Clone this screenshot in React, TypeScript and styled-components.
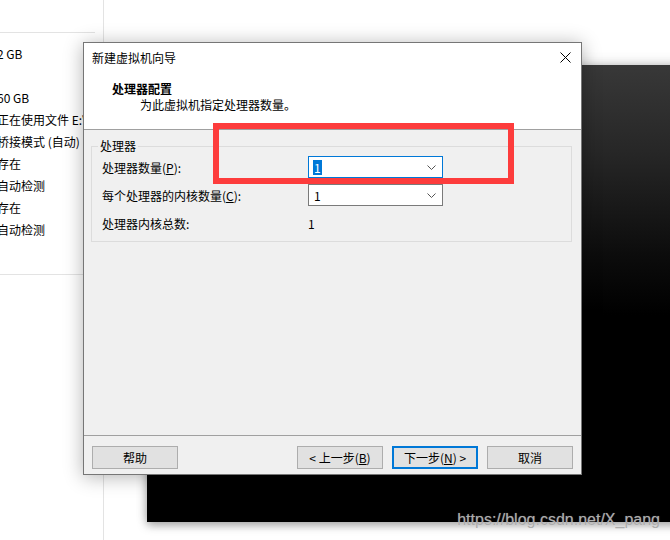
import React from 'react';
import styled, {createGlobalStyle} from 'styled-components';

const GlobalStyle = createGlobalStyle`
  html, body {
    margin: 0;
    padding: 0;
  }
  body {
    background: #fff;
    color: #000;
    font-family: "Noto Sans CJK SC", "Noto Sans", sans-serif;
    font-size: 12px;
  }
`

const summaryValues = ['2 GB', '', '60 GB', '正在使用文件 E:\\cn_windows_10', '桥接模式 (自动)', '存在', '自动检测', '存在', '自动检测']

const ChevronDown = () => (
    <svg width="9" height="5" viewBox="0 0 9 5">
        <polyline points="0.5,0.5 4.5,4.5 8.5,0.5" fill="none" stroke="#555" strokeWidth="1"/>
    </svg>
)

const CloseIcon = () => (
    <svg width="11" height="11" viewBox="0 0 11 11">
        <path d="M0.5 0.5 L10.5 10.5 M10.5 0.5 L0.5 10.5" stroke="#000" strokeWidth="1"/>
    </svg>
)

type ComboProps = { value: string, focused?: boolean }

const Combo: React.FC<ComboProps> = ({value, focused}) => (
    <ComboBox $focused={focused}>
        <ComboValue $focused={focused}>{value}</ComboValue>
        <ChevronDown/>
    </ComboBox>
)

export default function App() {
    return (
        <>
            <GlobalStyle/>
            <Screen>
                <SummaryPanel>
                    <PanelHead/>
                    <SummaryList>
                        {summaryValues.map((v, i) => <SummaryRow key={i}>{v}</SummaryRow>)}
                    </SummaryList>
                </SummaryPanel>

                <MainArea>
                    <VmScreen/>
                </MainArea>

                <Dialog>
                    <TitleBar>
                        <span>新建虚拟机向导</span>
                        <CloseIcon/>
                    </TitleBar>
                    <Header>
                        <HeaderTitle>处理器配置</HeaderTitle>
                        <HeaderSub>为此虚拟机指定处理器数量。</HeaderSub>
                    </Header>
                    <Body>
                        <Group>
                            <Legend>处理器</Legend>
                            <FormGrid>
                                <Label>处理器数量(<u>P</u>):</Label>
                                <Combo value="1" focused/>
                                <Label>每个处理器的内核数量(<u>C</u>):</Label>
                                <Combo value="1"/>
                                <Label>处理器内核总数:</Label>
                                <StaticValue>1</StaticValue>
                            </FormGrid>
                        </Group>
                    </Body>
                    <Footer>
                        <Button>帮助</Button>
                        <Spacer/>
                        <Button>&lt; 上一步(<u>B</u>)</Button>
                        <Button $primary>下一步(<u>N</u>) &gt;</Button>
                        <Button>取消</Button>
                    </Footer>
                </Dialog>

                <Highlight/>
                <Watermark>https://blog.csdn.net/X_pang</Watermark>
            </Screen>
        </>
    )
}

const Screen = styled.div`
  position: relative;
  display: flex;
  width: 670px;
  height: 540px;
  overflow: hidden;
  background: #fff;
`
const SummaryPanel = styled.div`
  width: 103px;
  flex-shrink: 0;
  border-right: 1px solid #e3e3e3;
  overflow: hidden;
`
const PanelHead = styled.div`
  height: 32px;
  margin-right: 8px;
  border-bottom: 1px solid #e3e3e3;
`
const SummaryList = styled.div`
  padding: 10px 0 33px;
  border-bottom: 1px solid #e3e3e3;
`
const SummaryRow = styled.div`
  height: 22px;
  line-height: 22px;
  margin-left: -3px;
  white-space: nowrap;
`
const MainArea = styled.div`
  flex: 1;
  padding: 65px 0 0 43px;
  overflow: hidden;
`
const VmScreen = styled.div`
  width: 600px;
  height: 457px;
  background: linear-gradient(180deg, #383838 0px, #262626 90px, #0c0c0c 190px, #000 250px);
  box-shadow: 0 3px 9px rgba(0, 0, 0, 0.35), 0 -2px 12px rgba(0, 0, 0, 0.12);
`
const Dialog = styled.div`
  position: absolute;
  left: 83px;
  top: 42px;
  width: 499px;
  height: 433px;
  box-sizing: border-box;
  display: flex;
  flex-direction: column;
  border: 1px solid #767676;
  background: #f0f0f0;
  box-shadow: 0 2px 18px rgba(0, 0, 0, 0.3);
`
const TitleBar = styled.div`
  height: 29px;
  display: flex;
  align-items: center;
  justify-content: space-between;
  padding: 0 10px 0 8px;
  background: #fff;
`
const Header = styled.div`
  height: 58px;
  box-sizing: border-box;
  padding-top: 9px;
  background: #fff;
  border-bottom: 1px solid #a0a0a0;
`
const HeaderTitle = styled.div`
  padding-left: 28px;
  line-height: 16px;
  font-weight: bold;
`
const HeaderSub = styled.div`
  padding-left: 56px;
  line-height: 16px;
`
const Body = styled.div`
  flex: 1;
  padding: 8px 9px 0 7px;
`
const Group = styled.fieldset`
  margin: 0;
  padding: 2px 10px 7px;
  border: 1px solid #dcdcdc;
`
const Legend = styled.legend`
  margin-left: -4px;
  padding: 0 2px;
  line-height: 16px;
`
const FormGrid = styled.div`
  display: grid;
  grid-template-columns: 206px 135px;
  grid-auto-rows: 22px;
  row-gap: 6px;
  align-items: center;
`
const Label = styled.div`
  white-space: nowrap;
`
const ComboBox = styled.div<{ $focused?: boolean }>`
  height: 22px;
  box-sizing: border-box;
  display: flex;
  align-items: center;
  justify-content: space-between;
  padding: 0 6px 0 4px;
  background: #fff;
  border: 1px solid ${p => p.$focused ? '#0078d7' : '#7a7a7a'};
`
const ComboValue = styled.span<{ $focused?: boolean }>`
  padding: 0 1px;
  line-height: 15px;
  background: ${p => p.$focused ? '#0078d7' : 'transparent'};
  color: ${p => p.$focused ? '#fff' : '#000'};
`
const StaticValue = styled.div``
const Footer = styled.div`
  height: 39px;
  box-sizing: border-box;
  display: flex;
  gap: 9px;
  padding: 10px 8px 0;
  border-top: 1px solid #a0a0a0;
`
const Spacer = styled.div`
  flex: 1;
`
const Button = styled.button<{ $primary?: boolean }>`
  width: 86px;
  height: 23px;
  box-sizing: border-box;
  padding: 0;
  font: inherit;
  color: #000;
  background: #e1e1e1;
  border: ${p => p.$primary ? '2px solid #0078d7' : '1px solid #adadad'};
`
const Highlight = styled.div`
  position: absolute;
  left: 213px;
  top: 123px;
  width: 301px;
  height: 61px;
  box-sizing: border-box;
  border: 6px solid #fd3c3c;
`
const Watermark = styled.div`
  position: absolute;
  right: 10px;
  top: 511px;
  font-family: "Liberation Sans", Arial, sans-serif;
  font-size: 16px;
  line-height: 18px;
  color: #acacac;
  text-shadow: 0 0 1px rgba(255, 255, 255, 0.4);
`
